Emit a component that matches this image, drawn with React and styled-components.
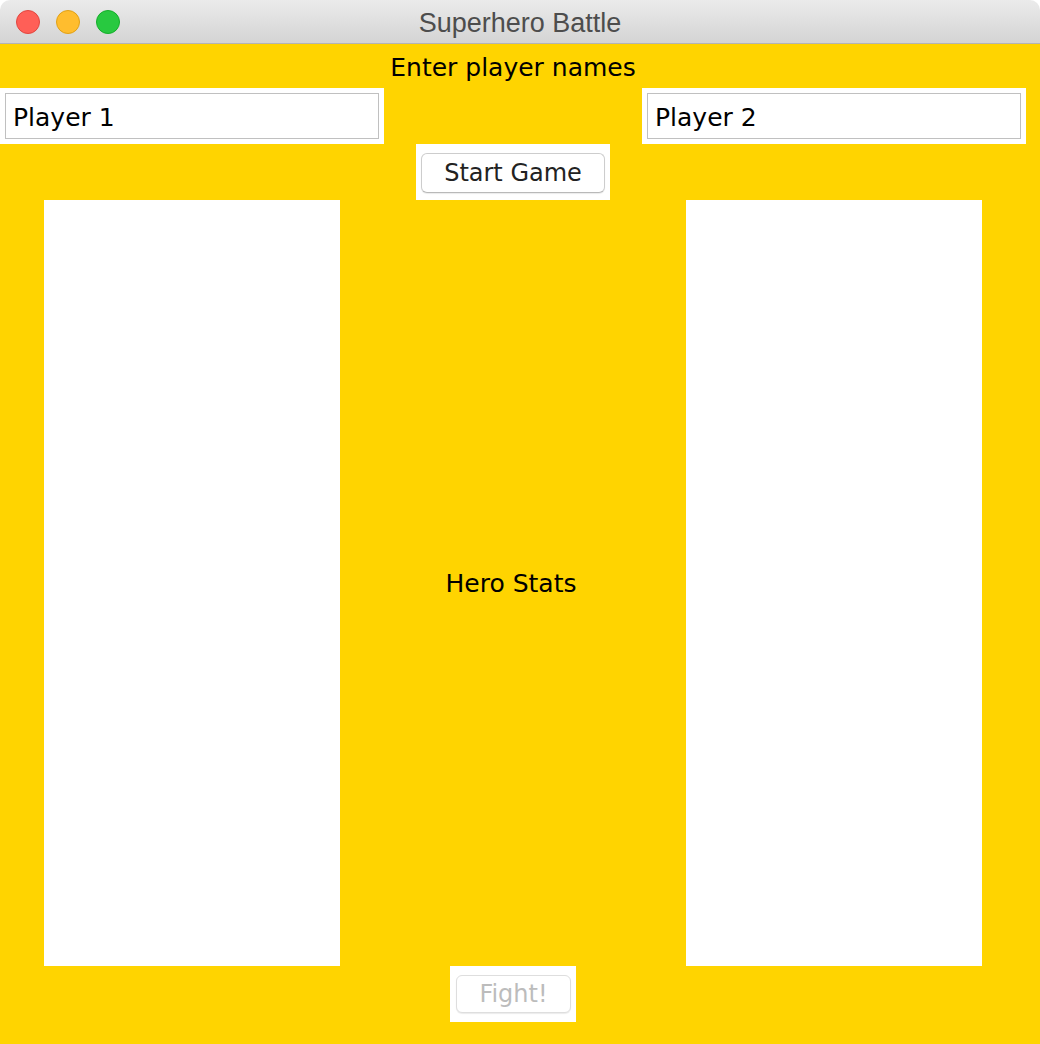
import React from "react";
import styled, { createGlobalStyle } from "styled-components";

const GlobalStyle = createGlobalStyle`
  html, body {
    margin: 0;
    padding: 0;
    background: #fff;
  }
  * {
    box-sizing: border-box;
  }
`;

const Window = styled.div`
  width: 1040px;
  height: 1044px;
  display: flex;
  flex-direction: column;
  overflow: hidden;
`;

const TitleBar = styled.div`
  position: relative;
  height: 44px;
  flex: none;
  display: flex;
  align-items: center;
  justify-content: center;
  padding-top: 3px;
  background: linear-gradient(#ebebeb, #d4d4d4);
  border-bottom: 1px solid #b4b4b4;
  border-radius: 10px 10px 0 0;
  font-family: "Liberation Sans", Arial, sans-serif;
  font-size: 27px;
  color: #4d4d4d;
`;

const Lights = styled.div`
  position: absolute;
  left: 16px;
  top: 10px;
  display: flex;
  gap: 16px;
`;

const Light = styled.span`
  width: 24px;
  height: 24px;
  border-radius: 50%;
  background: ${(p) => p.fill};
  border: 1px solid ${(p) => p.edge};
`;

const Content = styled.div`
  flex: 1;
  background: #ffd400;
  padding-right: 14px;
  display: grid;
  grid-template-rows: 44px 56px 56px 1fr 56px 22px;
  font-family: "DejaVu Sans", Verdana, sans-serif;
  color: #000;
`;

const Heading = styled.div`
  display: flex;
  align-items: center;
  justify-content: center;
  padding-top: 2px;
  font-size: 25px;
`;

const FieldsRow = styled.div`
  display: flex;
  justify-content: space-between;
`;

const FieldBox = styled.div`
  width: 384px;
  background: #fff;
  padding: 5px;
`;

const NameInput = styled.input`
  width: 100%;
  height: 46px;
  border: 1px solid #c0c0c0;
  padding: 2px 7px 0;
  font-family: "DejaVu Sans", Verdana, sans-serif;
  font-size: 25px;
  color: #000;
  outline: none;
  background: #fff;
`;

const ButtonRow = styled.div`
  display: flex;
  justify-content: center;
`;

const ButtonBox = styled.div`
  background: #fff;
  padding: 9px 5px ${(p) => p.bottom}px ${(p) => p.left}px;
  display: flex;
`;

const PushButton = styled.button`
  width: ${(p) => p.w}px;
  height: ${(p) => p.h}px;
  border: 1px solid #cdcdcd;
  border-bottom-color: #b9b9b9;
  border-radius: 6px;
  background: #fff;
  box-shadow: 0 1px 1px rgba(0, 0, 0, 0.08);
  font-family: "DejaVu Sans", Verdana, sans-serif;
  font-size: 24px;
  color: ${(p) => (p.disabled ? "#bcbcbc" : "#222")};
  padding: 0;
  ${(p) => p.disabled && "border-color: #dedede;"}
`;

const Middle = styled.div`
  display: grid;
  grid-template-columns: 44px 296px 1fr 296px 44px;
`;

const HeroPanel = styled.div`
  grid-column: ${(p) => p.col};
  background: #fff;
`;

const Stats = styled.div`
  grid-column: 3;
  display: flex;
  align-items: center;
  justify-content: center;
  padding-right: 4px;
  font-size: 25px;
`;

export default function App() {
  return (
    <Window>
      <GlobalStyle />
      <TitleBar>
        <Lights>
          <Light fill="#ff5f57" edge="#e2463f" />
          <Light fill="#ffbd2e" edge="#e1a116" />
          <Light fill="#28c940" edge="#14ae2a" />
        </Lights>
        Superhero Battle
      </TitleBar>
      <Content>
        <Heading>Enter player names</Heading>
        <FieldsRow>
          <FieldBox>
            <NameInput defaultValue="Player 1" />
          </FieldBox>
          <FieldBox>
            <NameInput defaultValue="Player 2" />
          </FieldBox>
        </FieldsRow>
        <ButtonRow>
          <ButtonBox left={5} bottom={7}>
            <PushButton w={184} h={40}>Start Game</PushButton>
          </ButtonBox>
        </ButtonRow>
        <Middle>
          <HeroPanel col={2} />
          <Stats>Hero Stats</Stats>
          <HeroPanel col={4} />
        </Middle>
        <ButtonRow>
          <ButtonBox left={6} bottom={9}>
            <PushButton w={115} h={38} disabled>
              Fight!
            </PushButton>
          </ButtonBox>
        </ButtonRow>
        <div />
      </Content>
    </Window>
  );
}
